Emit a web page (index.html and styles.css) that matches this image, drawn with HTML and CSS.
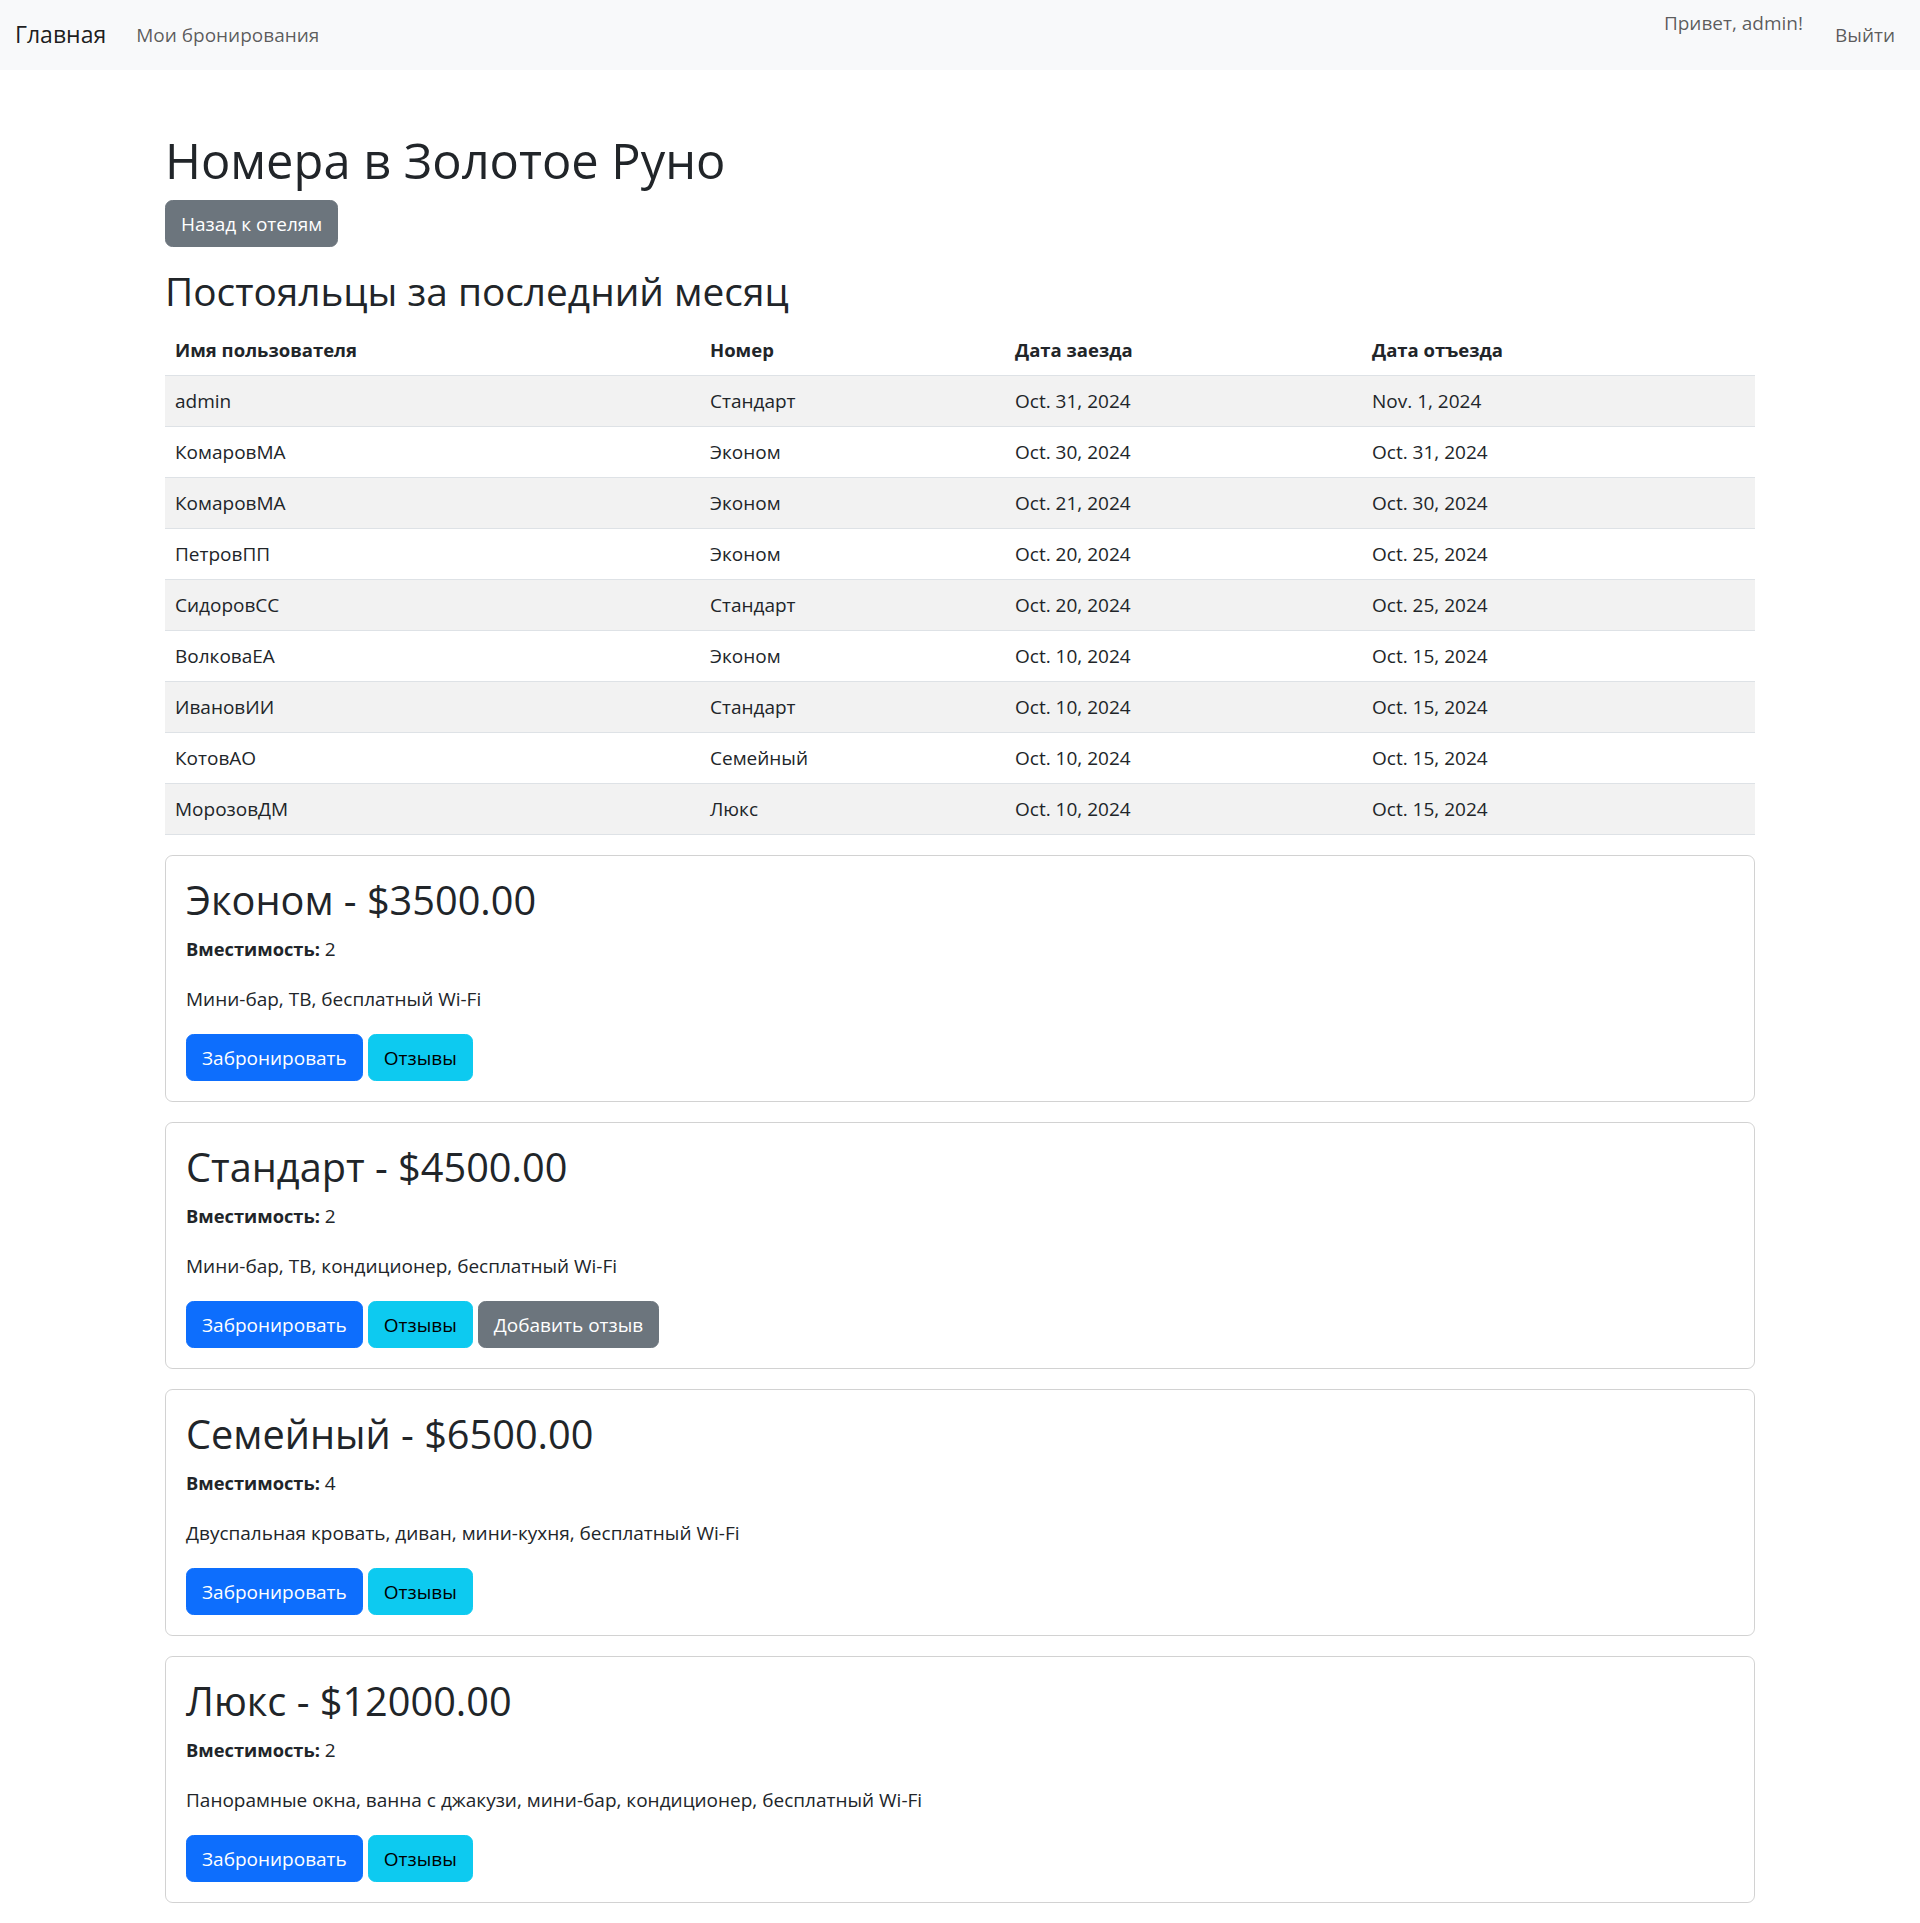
FILE: index.html
```html
<!DOCTYPE html>
<html lang="ru">
<head>
<meta charset="utf-8">
<title>Номера в Золотое Руно</title>
<link rel="stylesheet" href="styles.css">
</head>
<body>
<nav class="navbar">
  <div class="nav-left">
    <a class="brand" href="#">Главная</a>
    <a class="nav-link" href="#">Мои бронирования</a>
  </div>
  <div class="nav-right">
    <span class="navbar-text">Привет, admin!</span>
    <a class="nav-link" href="#">Выйти</a>
  </div>
</nav>
<main class="container">
  <h1 class="page-title">Номера в Золотое Руно</h1>
  <a class="btn btn-secondary" href="#">Назад к отелям</a>
  <h2 class="section-title">Постояльцы за последний месяц</h2>
  <table class="table">
    <colgroup>
      <col class="c1"><col class="c2"><col class="c3"><col class="c4">
    </colgroup>
    <thead>
      <tr><th>Имя пользователя</th><th>Номер</th><th>Дата заезда</th><th>Дата отъезда</th></tr>
    </thead>
    <tbody>
      <tr><td>admin</td><td>Стандарт</td><td>Oct. 31, 2024</td><td>Nov. 1, 2024</td></tr>
      <tr><td>КомаровМА</td><td>Эконом</td><td>Oct. 30, 2024</td><td>Oct. 31, 2024</td></tr>
      <tr><td>КомаровМА</td><td>Эконом</td><td>Oct. 21, 2024</td><td>Oct. 30, 2024</td></tr>
      <tr><td>ПетровПП</td><td>Эконом</td><td>Oct. 20, 2024</td><td>Oct. 25, 2024</td></tr>
      <tr><td>СидоровСС</td><td>Стандарт</td><td>Oct. 20, 2024</td><td>Oct. 25, 2024</td></tr>
      <tr><td>ВолковаЕА</td><td>Эконом</td><td>Oct. 10, 2024</td><td>Oct. 15, 2024</td></tr>
      <tr><td>ИвановИИ</td><td>Стандарт</td><td>Oct. 10, 2024</td><td>Oct. 15, 2024</td></tr>
      <tr><td>КотовАО</td><td>Семейный</td><td>Oct. 10, 2024</td><td>Oct. 15, 2024</td></tr>
      <tr><td>МорозовДМ</td><td>Люкс</td><td>Oct. 10, 2024</td><td>Oct. 15, 2024</td></tr>
    </tbody>
  </table>

  <div class="card">
    <div class="card-body">
      <h2 class="card-title">Эконом - $3500.00</h2>
      <p><strong>Вместимость:</strong> 2</p>
      <p>Мини-бар, ТВ, бесплатный Wi-Fi</p>
      <div class="actions">
        <a class="btn btn-primary" href="#">Забронировать</a>
        <a class="btn btn-info" href="#">Отзывы</a>
      </div>
    </div>
  </div>

  <div class="card">
    <div class="card-body">
      <h2 class="card-title">Стандарт - $4500.00</h2>
      <p><strong>Вместимость:</strong> 2</p>
      <p>Мини-бар, ТВ, кондиционер, бесплатный Wi-Fi</p>
      <div class="actions">
        <a class="btn btn-primary" href="#">Забронировать</a>
        <a class="btn btn-info" href="#">Отзывы</a>
        <a class="btn btn-secondary" href="#">Добавить отзыв</a>
      </div>
    </div>
  </div>

  <div class="card">
    <div class="card-body">
      <h2 class="card-title">Семейный - $6500.00</h2>
      <p><strong>Вместимость:</strong> 4</p>
      <p>Двуспальная кровать, диван, мини-кухня, бесплатный Wi-Fi</p>
      <div class="actions">
        <a class="btn btn-primary" href="#">Забронировать</a>
        <a class="btn btn-info" href="#">Отзывы</a>
      </div>
    </div>
  </div>

  <div class="card">
    <div class="card-body">
      <h2 class="card-title">Люкс - $12000.00</h2>
      <p><strong>Вместимость:</strong> 2</p>
      <p>Панорамные окна, ванна с джакузи, мини-бар, кондиционер, бесплатный Wi-Fi</p>
      <div class="actions">
        <a class="btn btn-primary" href="#">Забронировать</a>
        <a class="btn btn-info" href="#">Отзывы</a>
      </div>
    </div>
  </div>
</main>
</body>
</html>
```

FILE: styles.css
```css
* { box-sizing: border-box; }
html, body { margin: 0; padding: 0; }
body {
  font-family: "Segoe UI", "Open Sans", "Noto Sans", sans-serif;
  font-size: 19px;
  line-height: 30px;
  color: #212529;
  background: #fff;
}
a { text-decoration: none; }
strong { font-size: 18.3px; font-weight: 700; }

.navbar {
  background: #f8f9fa;
  height: 70px;
  padding: 10px 15px;
  display: flex;
  justify-content: space-between;
}
.nav-left { display: flex; align-items: center; }
.nav-right { display: flex; align-items: flex-start; }
.brand {
  font-size: 23px;
  line-height: 37.5px;
  color: rgba(0,0,0,.9);
  margin-right: 20px;
  padding: 6px 0;
}
.nav-link {
  color: rgba(0,0,0,.65);
  padding: 10px;
  line-height: 30px;
  display: block;
}
.navbar-text {
  color: rgba(0,0,0,.65);
  line-height: 30px;
  margin-top: -2px;
  margin-right: 22px;
}

.container {
  width: 1590px;
  margin: 60px auto 0;
}
.page-title {
  font-size: 48.8px;
  line-height: 60px;
  font-weight: 500;
  margin: 0 0 10px;
}
.section-title {
  font-size: 38.8px;
  line-height: 48px;
  font-weight: 500;
  margin: 20px 0 10px;
}

.btn {
  display: inline-block;
  font-size: 19px;
  line-height: 30px;
  padding: 7.5px 15px;
  border: 1.25px solid transparent;
  border-radius: 7.5px;
  vertical-align: middle;
}
.btn-primary { background: #0d6efd; border-color: #0d6efd; color: #fff; }
.btn-info { background: #0dcaf0; border-color: #0dcaf0; color: #000; }
.btn-secondary { background: #6c757d; border-color: #6c757d; color: #fff; }

.table {
  width: 100%;
  border-collapse: collapse;
  table-layout: fixed;
  margin-bottom: 20px;
}
.c1 { width: 535px; }
.c2 { width: 305px; }
.c3 { width: 357px; }
.c4 { width: 393px; }
.table th, .table td {
  text-align: left;
  padding: 10px;
  border-bottom: 1px solid #dee2e6;
  line-height: 30px;
}
.table th { font-weight: 700; font-size: 18.5px; }
.table tbody tr:nth-child(odd) td { background: #f2f2f2; }

.card {
  border: 1px solid rgba(0,0,0,.175);
  border-radius: 7.5px;
  margin-bottom: 20px;
}
.card-body { padding: 20px; }
.card-title {
  font-size: 39.7px;
  line-height: 48px;
  font-weight: 500;
  margin: 0 0 10px;
}
.card-body p { margin: 0 0 20px; }
.actions { display: flex; gap: 5px; }
```
